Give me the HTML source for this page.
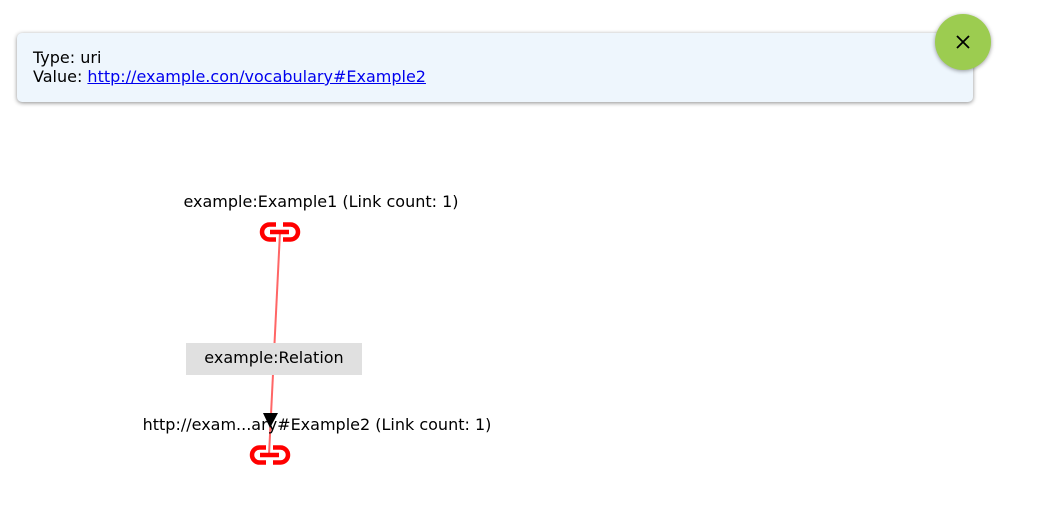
<!DOCTYPE html>
<html><head><style>
body{margin:0;width:1047px;height:517px;background:#fff;font-family:"DejaVu Sans","Liberation Sans",sans-serif;position:relative;overflow:hidden}
.panel{position:absolute;left:17px;top:33px;width:956px;height:69px;background:#eef6fd;border-radius:5px;box-shadow:0 1px 4px rgba(0,0,0,.45);box-sizing:border-box;padding:15px 16px;font-size:16px;line-height:19px;color:#000}
.panel a{color:#00e;text-decoration:underline}
.close{position:absolute;left:935px;top:14px;width:56px;height:56px;border-radius:50%;background:#9ccc50;box-shadow:0 1px 4px rgba(0,0,0,.4)}
</style></head><body>
<div class="panel">Type: uri<br>Value: <a>http://example.con/vocabulary#Example2</a></div>
<div class="close"><svg width="56" height="56"><path d="M22 22L34 34M34 22L22 34" stroke="#000" stroke-width="1.8"/></svg></div>
<svg width="1047" height="517" style="position:absolute;left:0;top:0;pointer-events:none">
<line x1="280" y1="232" x2="269" y2="455" stroke="#f66" stroke-width="2"/>
<rect x="186" y="343" width="176" height="32" fill="#e0e0e0"/>
<text x="274" y="363" font-size="16" text-anchor="middle" font-family="DejaVu Sans,sans-serif">example:Relation</text>
<polygon points="263,413 278,413 270,428" fill="#000"/>
<text x="321" y="207" font-size="16" text-anchor="middle" font-family="DejaVu Sans,sans-serif">example:Example1 (Link count: 1)</text>
<text x="317" y="430" font-size="16" text-anchor="middle" font-family="DejaVu Sans,sans-serif">http://exam...ary#Example2 (Link count: 1)</text>
<g fill="none" stroke="#f00" stroke-width="4.5">
<path d="M276 224.5H269.5A7.5 7.5 0 0 0 269.5 239.5H276M283 224.5H290.5A7.5 7.5 0 0 1 290.5 239.5H283M270 232H289"/>
<path d="M266 447.5H259.5A7.5 7.5 0 0 0 259.5 462.5H266M273 447.5H280.5A7.5 7.5 0 0 1 280.5 462.5H273M260 455H279"/>
</g>
</svg>
</body></html>
